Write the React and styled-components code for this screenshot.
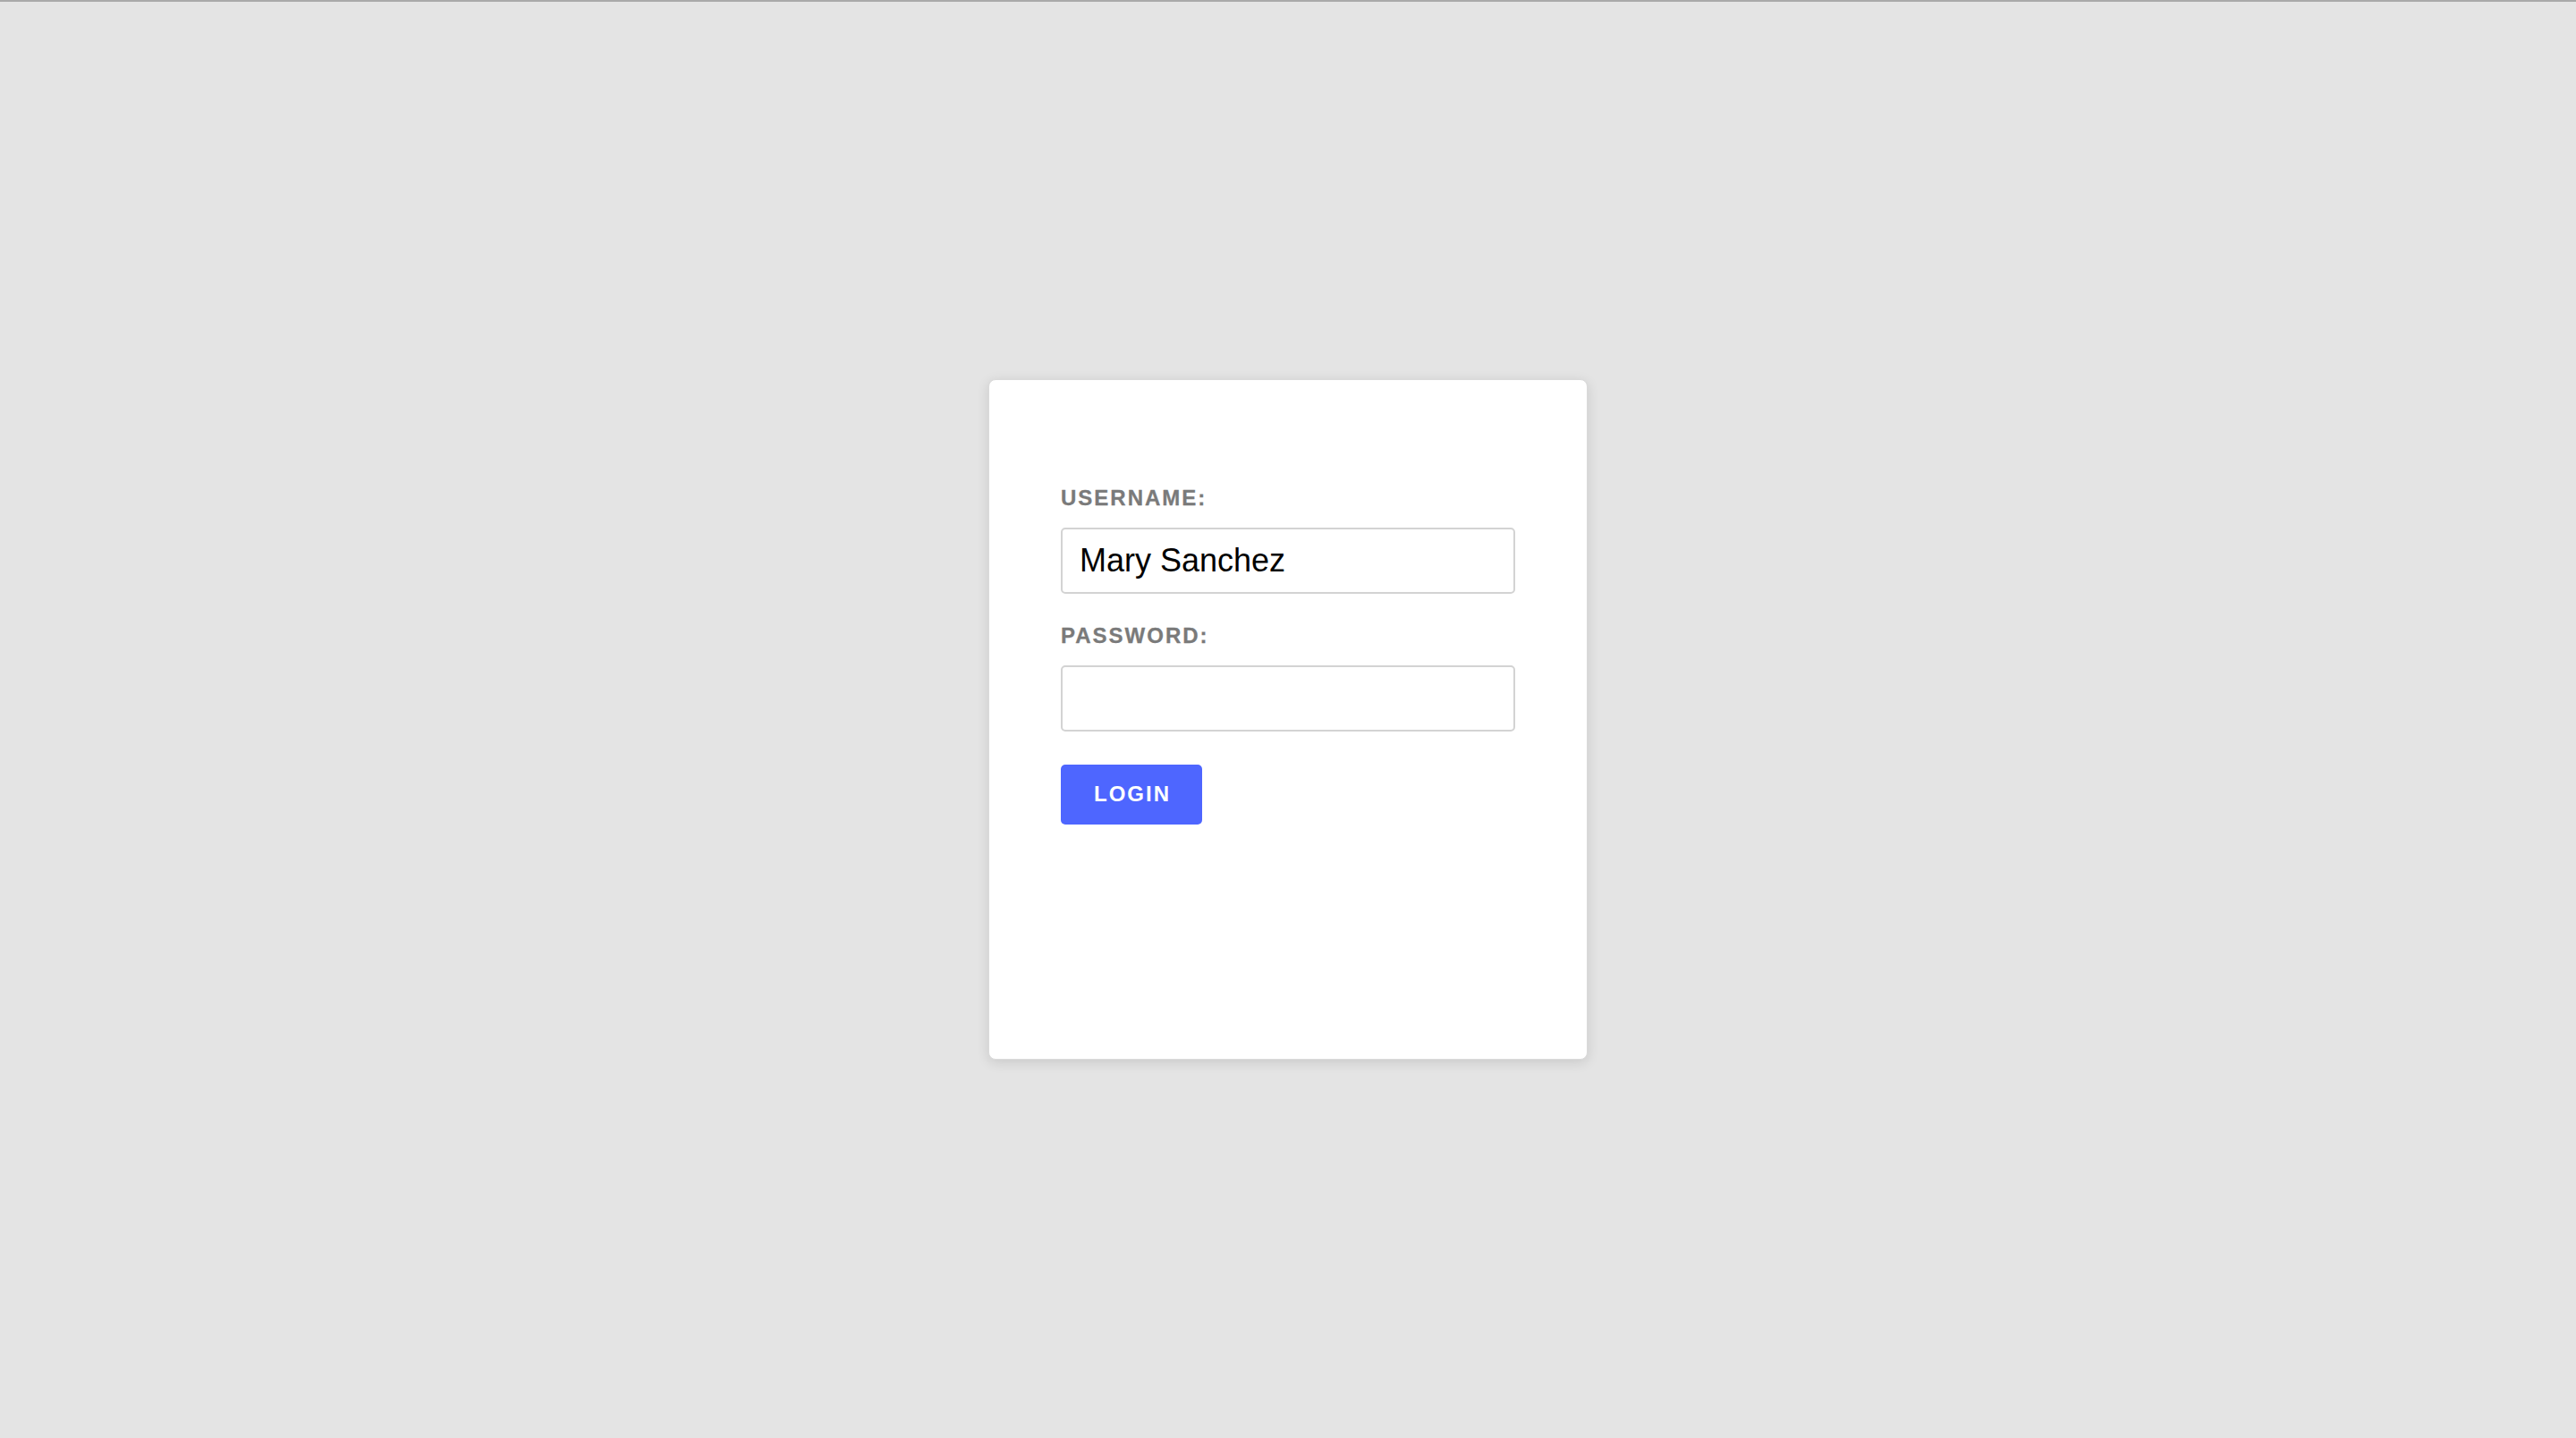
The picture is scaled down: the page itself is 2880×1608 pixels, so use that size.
import React, { useState } from "react";
import styled, { createGlobalStyle } from "styled-components";

const GlobalStyle = createGlobalStyle`
  html,
  body {
    margin: 0;
    padding: 0;
  }
  body {
    font-family: "Liberation Sans", Arial, Helvetica, sans-serif;
    background: #e4e4e4;
  }
`;

const Page = styled.div`
  box-sizing: border-box;
  height: 100vh;
  border-top: 2px solid #a9a9a9;
  background: #e4e4e4;
  display: flex;
  align-items: center;
  justify-content: center;
`;

const Card = styled.div`
  box-sizing: border-box;
  width: 670px;
  height: 761px;
  margin-top: -2px;
  padding: 118px 80px 0 80px;
  background: #ffffff;
  border: 1px solid #dadada;
  border-radius: 8px;
  box-shadow: 0 3px 14px rgba(0, 0, 0, 0.12);
`;

const Form = styled.form`
  display: flex;
  flex-direction: column;
  align-items: flex-start;
`;

const Label = styled.label`
  display: block;
  font-size: 24px;
  font-weight: 700;
  letter-spacing: 2px;
  line-height: 28px;
  color: #7a7a7a;
  -webkit-text-stroke: 0.3px #7a7a7a;
  margin-top: ${(props) => (props.first ? "0" : "33px")};
  margin-bottom: 19px;
`;

const Input = styled.input`
  box-sizing: border-box;
  width: 100%;
  height: 74px;
  padding: 0 19px;
  border: 2px solid #d3d3d3;
  border-radius: 5px;
  font-family: "Liberation Sans", Arial, Helvetica, sans-serif;
  font-size: 36px;
  color: #000000;
  background: #ffffff;
  outline: none;
`;

const Button = styled.button`
  margin-top: 37px;
  height: 67px;
  padding: 0 35px 0 37px;
  border: none;
  border-radius: 5px;
  background: #4e66ff;
  color: #ffffff;
  font-family: "Liberation Sans", Arial, Helvetica, sans-serif;
  font-size: 24px;
  font-weight: 700;
  letter-spacing: 2px;
  cursor: pointer;
`;

const App = () => {
  const [username, setUsername] = useState("Mary Sanchez");
  const [password, setPassword] = useState("");

  return (
    <>
      <GlobalStyle />
      <Page>
        <Card>
          <Form onSubmit={(e) => e.preventDefault()}>
            <Label first htmlFor="username">
              USERNAME:
            </Label>
            <Input
              id="username"
              type="text"
              value={username}
              onChange={(e) => setUsername(e.target.value)}
            />
            <Label htmlFor="password">PASSWORD:</Label>
            <Input
              id="password"
              type="password"
              value={password}
              onChange={(e) => setPassword(e.target.value)}
            />
            <Button type="submit">LOGIN</Button>
          </Form>
        </Card>
      </Page>
    </>
  );
};

export default App;
